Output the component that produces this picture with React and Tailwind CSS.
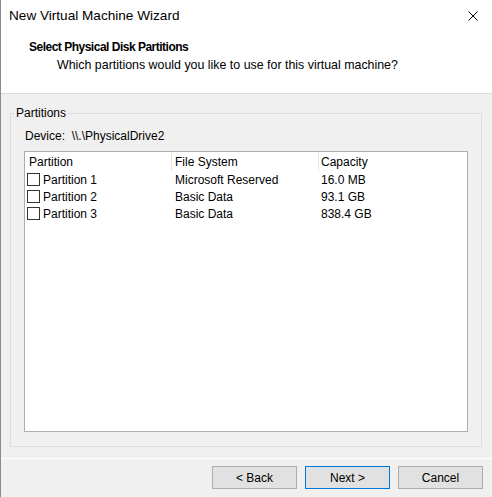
import React from "react";

const rows = [
  { name: "Partition 1", fs: "Microsoft Reserved", cap: "16.0 MB" },
  { name: "Partition 2", fs: "Basic Data", cap: "93.1 GB" },
  { name: "Partition 3", fs: "Basic Data", cap: "838.4 GB" },
];

function WizButton({ children, primary }) {
  return (
    <button
      className={
        "h-[23px] w-[85px] bg-[#e1e1e1] text-[12px] text-black border " +
        (primary ? "border-[#0078d7]" : "border-[#adadad]")
      }
    >
      {children}
    </button>
  );
}

export default function App() {
  return (
    <div
      className="w-[492px] h-[497px] bg-[#f0f0f0] border-l border-[#8c8c8c] flex flex-col overflow-hidden text-[12px] text-black"
      style={{ fontFamily: '"Liberation Sans", Arial, sans-serif' }}
    >
      {/* Header */}
      <div className="h-[94px] bg-white border-b border-[#dadada] flex flex-col">
        <div className="h-[32px] flex items-center justify-between pl-[8px] pr-[14px]">
          <span className="text-[13.6px]">New Virtual Machine Wizard</span>
          <svg width="10" height="10" viewBox="0 0 10 10" className="text-black">
            <path d="M0.5 0.5 L9.5 9.5 M9.5 0.5 L0.5 9.5" stroke="currentColor" strokeWidth="1" />
          </svg>
        </div>
        <div className="mt-[6px] h-[18px] flex items-center pl-[28px] font-bold text-[12px] tracking-[-0.5px]">
          Select Physical Disk Partitions
        </div>
        <div className="h-[18px] flex items-center pl-[56px] text-[12.4px]">
          Which partitions would you like to use for this virtual machine?
        </div>
      </div>

      {/* Group box */}
      <fieldset className="mt-[10px] ml-[9px] w-[472px] border border-[#dcdcdc] pb-[14px]">
        <legend className="ml-[3px] px-[2px] h-[18px] leading-[18px]">Partitions</legend>
        <div className="mt-[5px] h-[18px] flex items-center pl-[14px]">
          Device:&nbsp;&nbsp;\\.\PhysicalDrive2
        </div>
        <div className="mt-[6px] ml-[13px] w-[444px] h-[281px] bg-white border border-[#adadad]">
          <div className="h-[19px] flex">
            <div className="w-[147px] pl-[4px] flex items-center border-r border-[#e5e5e5]">Partition</div>
            <div className="w-[147px] pl-[3px] flex items-center border-r border-[#e5e5e5]">File System</div>
            <div className="flex-1 pl-[2px] flex items-center">Capacity</div>
          </div>
          {rows.map((r) => (
            <div key={r.name} className="h-[17px] flex">
              <div className="w-[147px] pl-[2px] flex items-center gap-[3px]">
                <span className="w-[13px] h-[13px] border border-[#333333] bg-white" />
                {r.name}
              </div>
              <div className="w-[147px] pl-[3px] flex items-center">{r.fs}</div>
              <div className="flex-1 pl-[2px] flex items-center">{r.cap}</div>
            </div>
          ))}
        </div>
      </fieldset>

      {/* Footer */}
      <div className="mt-[11px] border-t border-white" />
      <div className="mt-[7px] flex justify-end gap-[8px] pr-[9px]">
        <WizButton>&lt; Back</WizButton>
        <WizButton primary>Next &gt;</WizButton>
        <WizButton>Cancel</WizButton>
      </div>
    </div>
  );
}
